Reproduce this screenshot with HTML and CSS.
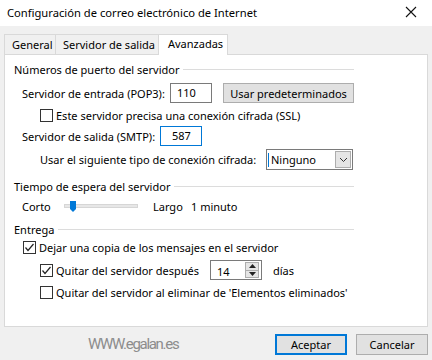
FILE: index.html
```html
<!DOCTYPE html>
<html lang="es">
<head>
    <meta charset="UTF-8" />
    <title>Configuración de correo electrónico de Internet</title>
    <link rel="stylesheet" href="styles.css">
</head>
<body>
<div class="window">
    <div class="titlebar">
        <span class="title">Configuración de correo electrónico de Internet</span>
        <svg class="close" width="12" height="12" viewBox="0 0 12 12"><path d="M1 1L11 11M11 1L1 11" stroke="#111" stroke-width="1.1"/></svg>
    </div>

    <div class="tabs">
        <div class="tab tab-general">General</div>
        <div class="tab tab-salida">Servidor de salida</div>
        <div class="tab active">Avanzadas</div>
    </div>

    <div class="panel">
        <div class="legend legend-ports"><span>Números de puerto del servidor</span></div>
        <div class="row row-pop">
            <span class="lbl lbl-pop">Servidor de entrada (POP3):</span>
            <div class="field port">110</div>
            <div class="btn btn-defaults">Usar predeterminados</div>
        </div>
        <div class="row row-ssl indent">
            <span class="check"></span>
            <span>Este servidor precisa una conexión cifrada (SSL)</span>
        </div>
        <div class="row row-smtp">
            <span class="lbl lbl-smtp">Servidor de salida (SMTP):</span>
            <div class="field port focused">587</div>
        </div>
        <div class="row row-enc indent">
            <span class="lbl lbl-enc">Usar el siguiente tipo de conexión cifrada:</span>
            <div class="select">
                <span class="select-text">Ninguno</span>
                <span class="select-btn">
                    <svg width="9" height="6" viewBox="0 0 9 6"><path d="M1 1L4.5 4.5L8 1" fill="none" stroke="#333" stroke-width="1"/></svg>
                </span>
            </div>
        </div>

        <div class="legend legend-time"><span>Tiempo de espera del servidor</span></div>
        <div class="row row-slider">
            <span class="lbl lbl-short">Corto</span>
            <div class="slider">
                <div class="track"></div>
                <svg class="thumb" width="6" height="11" viewBox="0 0 6 11"><path d="M0 0H6V8L3 11L0 8Z" fill="#0078d7"/></svg>
            </div>
            <span class="lbl lbl-long">Largo</span>
            <span>1 minuto</span>
        </div>

        <div class="legend legend-deliver"><span>Entrega</span></div>
        <div class="row row-copy">
            <span class="check checked"><svg width="11" height="11" viewBox="0 0 11 11"><path d="M1.5 5.5L4 8.5L9.5 2" fill="none" stroke="#222" stroke-width="1.2"/></svg></span>
            <span>Dejar una copia de los mensajes en el servidor</span>
        </div>
        <div class="row row-after indent">
            <span class="check checked"><svg width="11" height="11" viewBox="0 0 11 11"><path d="M1.5 5.5L4 8.5L9.5 2" fill="none" stroke="#222" stroke-width="1.2"/></svg></span>
            <span class="lbl lbl-after">Quitar del servidor después</span>
            <div class="spin">
                <span class="spin-text">14</span>
                <span class="spin-btns">
                    <span class="spin-up"><svg width="7" height="4" viewBox="0 0 7 4"><path d="M0 4L3.5 0L7 4Z" fill="#222"/></svg></span>
                    <span class="spin-down"><svg width="7" height="4" viewBox="0 0 7 4"><path d="M0 0L3.5 4L7 0Z" fill="#222"/></svg></span>
                </span>
            </div>
            <span>días</span>
        </div>
        <div class="row row-deleted indent">
            <span class="check"></span>
            <span>Quitar del servidor al eliminar de 'Elementos eliminados'</span>
        </div>
    </div>

    <div class="footer">
        <span class="watermark">WWW.egalan.es</span>
        <div class="btn btn-ok">Aceptar</div>
        <div class="btn btn-cancel">Cancelar</div>
    </div>
</div>
</body>
</html>
```

FILE: styles.css
```css
body {
    margin: 0;
    font-family: "Noto Sans", "Open Sans", sans-serif;
    font-size: 11px;
    color: #000;
    background-color: #f0f0f0;
}

.window {
    width: 432px;
    height: 360px;
    overflow: hidden;
    background-color: #f0f0f0;
    white-space: nowrap;
}

.titlebar {
    height: 26px;
    background-color: #fff;
    display: flex;
    align-items: center;
    padding: 0 15px 2px 7px;
    box-sizing: border-box;
}

.title {
    flex: 1;
    font-size: 11.2px;
    color: #000;
}

.close {
    display: block;
}

.tabs {
    display: flex;
    align-items: flex-end;
    height: 28px;
    padding-left: 4px;
    box-sizing: border-box;
}

.tab {
    height: 20px;
    line-height: 19px;
    padding: 0 7px;
    border: 1px solid #d9d9d9;
    border-bottom: none;
    background-color: #f0f0f0;
    box-sizing: border-box;
}

.tab-general { width: 52px; }
.tab-salida { width: 104px; }

.tab + .tab {
    border-left: none;
}

.tab.active {
    width: 70px;
    height: 21px;
    margin-bottom: -1px;
    margin-left: -2px;
    padding: 0 0 0 9px;
    border-left: 1px solid #d9d9d9;
    background-color: #fff;
    position: relative;
    line-height: 18px;
}

.panel {
    margin: 0 4px;
    height: 273px;
    background-color: #fff;
    border: 1px solid #d9d9d9;
    box-sizing: border-box;
    padding: 0 0 0 9px;
}

.legend {
    display: flex;
    align-items: center;
    height: 16px;
    width: 340px;
}

.legend::after {
    content: "";
    flex: 1;
    height: 1px;
    margin-left: 4px;
    background-color: #dcdcdc;
}

.legend-ports { margin-top: 6px; }
.legend-time { margin-top: 8px; }
.legend-deliver { margin-top: 8px; }

.row {
    display: flex;
    align-items: center;
    padding-left: 8px;
    height: 14px;
}

.row > * {
    flex-shrink: 0;
}

.row.indent {
    padding-left: 26px;
}

.row-pop { margin-top: 6px; height: 20px; }
.row-ssl { margin-top: 5px; }
.row-smtp { margin-top: 4px; height: 20px; }
.row-enc { margin-top: 3px; height: 21px; }
.row-slider { margin-top: 5px; }
.row-copy { margin-top: 3px; padding-left: 9px; }
.row-after { margin-top: 6px; height: 20px; }
.row-deleted { margin-top: 5px; }

.lbl-pop { width: 148px; }
.lbl-smtp { width: 138px; }
.lbl-enc { width: 226px; }
.lbl-short { width: 42px; }
.lbl-long { width: 38px; }
.lbl-after { width: 154px; }

.field {
    height: 20px;
    border: 1px solid #7a7a7a;
    box-sizing: border-box;
    line-height: 18px;
}

.port {
    width: 42px;
    padding-left: 6px;
}

.row-smtp .port {
    padding-left: 11px;
}

.focused {
    border-color: #0078d7;
}

.btn {
    height: 21px;
    border: 1px solid #adadad;
    background-color: #e1e1e1;
    box-sizing: border-box;
    display: flex;
    align-items: center;
    justify-content: center;
}

.btn-defaults {
    width: 131px;
    margin-left: 11px;
    height: 20px;
}

.check {
    width: 13px;
    height: 13px;
    border: 1px solid #333;
    box-sizing: border-box;
    margin-right: 3px;
    display: flex;
    align-items: center;
    justify-content: center;
    background-color: #fff;
}

.check svg {
    display: block;
}

.select {
    width: 87px;
    height: 21px;
    border: 1px solid #7a7a7a;
    box-sizing: border-box;
    display: flex;
    align-items: center;
}

.select-text {
    flex: 1;
    padding-left: 2px;
    border-left: 1px solid #0078d7;
    margin-left: 1px;
    line-height: 14px;
}

.select-btn {
    width: 16px;
    height: 17px;
    margin-right: 1px;
    border: 1px solid #adadad;
    background-color: #e5e5e5;
    box-sizing: border-box;
    display: flex;
    align-items: center;
    justify-content: center;
}

.slider {
    width: 74px;
    height: 11px;
    margin-right: 15px;
    position: relative;
}

.track {
    position: absolute;
    left: 0;
    right: 0;
    top: 3px;
    height: 4px;
    background-color: #e7e7e7;
    border: 1px solid #d6d6d6;
    box-sizing: border-box;
}

.thumb {
    position: absolute;
    left: 6px;
    top: 0;
}

.spin {
    width: 52px;
    height: 20px;
    border: 1px solid #7a7a7a;
    box-sizing: border-box;
    display: flex;
    align-items: center;
    margin-right: 11px;
}

.spin-text {
    flex: 1;
    padding-left: 6px;
    padding-top: 2px;
}

.spin-btns {
    display: flex;
    flex-direction: column;
    width: 14px;
    height: 16px;
    margin-right: 2px;
    border: 1px solid #adadad;
    box-sizing: border-box;
}

.spin-up, .spin-down {
    flex: 1;
    display: flex;
    align-items: center;
    justify-content: center;
    background-color: #e5e5e5;
}

.spin-up {
    border-bottom: 1px solid #adadad;
}

.spin-btns svg {
    display: block;
}

.footer {
    display: flex;
    align-items: center;
    height: 33px;
    padding-top: 1px;
    box-sizing: border-box;
}

.watermark {
    margin-left: 88px;
    width: 187px;
    font-family: "Roboto", sans-serif;
    font-size: 15px;
    color: #8c8c8c;
    letter-spacing: -1.3px;
}

.btn-ok {
    width: 72px;
    border: 2px solid #0078d7;
}

.btn-cancel {
    width: 72px;
    margin-left: 9px;
}
```
